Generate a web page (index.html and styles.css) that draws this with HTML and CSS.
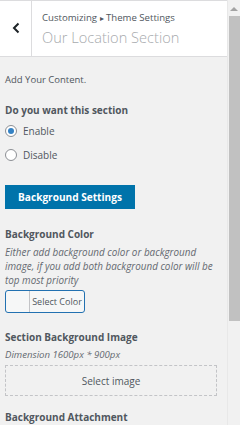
FILE: index.html
```html
<!DOCTYPE html>
<html>
<head>
<meta charset="utf-8">
<link rel="stylesheet" href="styles.css">
</head>
<body>
<div class="frame">
  <div class="panel">
    <header class="head">
      <div class="back">
        <svg width="8" height="12" viewBox="0 0 8 12"><path d="M6.5 1.5 L2 6 L6.5 10.5" fill="none" stroke="#1d2327" stroke-width="2"/></svg>
      </div>
      <div class="titles">
        <div class="crumb">Customizing <span class="tri">▸</span> Theme Settings</div>
        <div class="title">Our Location Section</div>
      </div>
    </header>
    <main class="content">
      <p class="intro">Add Your Content.</p>
      <h3 class="label first">Do you want this section</h3>
      <label class="radio"><span class="dot on"></span>Enable</label>
      <label class="radio"><span class="dot"></span>Disable</label>
      <div class="btn">Background Settings</div>
      <h3 class="label">Background Color</h3>
      <p class="desc">Either add background color or background image, if you add both background color will be top most priority</p>
      <div class="color"><span class="swatch"></span><span class="ctext">Select Color</span></div>
      <h3 class="label">Section Background Image</h3>
      <p class="desc short">Dimension 1600px * 900px</p>
      <div class="upload">Select image</div>
      <h3 class="label">Background Attachment</h3>
    </main>
  </div>
  <div class="scroll">
    <div class="arrow"></div>
    <div class="thumb"></div>
  </div>
</div>
</body>
</html>
```
FILE: styles.css
```css
* { box-sizing: border-box; }
html, body { margin: 0; padding: 0; }
body {
  width: 240px;
  height: 425px;
  overflow: hidden;
  background: #f1f1f1;
  font-family: "Open Sans", "Noto Sans", sans-serif;
  color: #50575e;
}
.frame { display: flex; height: 425px; }
.panel { flex: 1; min-width: 0; }
.head {
  display: flex;
  height: 57px;
  background: #fff;
  border-top: 1px solid #dcdcde;
  border-bottom: 1px solid #dcdcde;
}
.back {
  width: 32px;
  border-right: 1px solid #dcdcde;
  display: flex;
  align-items: center;
  justify-content: center;
  padding-bottom: 2px;
}
.titles { padding: 10px 0 0 10px; }
.crumb { font-size: 9.6px; line-height: 14px; color: #50575e; }
.tri { font-size: 8px; }
.title { font-size: 14.6px; line-height: 22px; margin-top: 1px; color: #a7aaad; font-weight: 300; }
.content { padding: 0 5px; }
.intro { margin: 16px 0 0; font-size: 9.5px; line-height: 14px; }
.label { margin: 0; font-size: 10px; font-weight: 700; line-height: 16px; color: #50575e; }
.label.first { margin-top: 15px; }
.radio { display: flex; align-items: center; font-size: 10px; line-height: 14px; height: 24px; gap: 6px; }
.radio:first-of-type { margin-top: 1px; }
.dot {
  width: 12px; height: 12px; border-radius: 50%;
  border: 1px solid #8c8f94; background: #fff;
  display: flex; align-items: center; justify-content: center;
}
.dot.on::after { content: ""; width: 6px; height: 6px; border-radius: 50%; background: #3582c4; }
.btn {
  margin-top: 18px;
  width: 130px; height: 24px;
  background: #0073aa; color: #fff;
  font-weight: 700; font-size: 10.1px;
  display: flex; align-items: center; justify-content: center;
  margin-bottom: 17px;
}
.desc { margin: 3px 0 0; max-width: 212px; font-size: 9.9px; font-style: italic; line-height: 14px; color: #646970; }
.color {
  margin-top: 3px;
  width: 80px; height: 23px;
  border: 1px solid #2271b1; border-radius: 3px;
  display: flex; background: #f6f7f7;
  margin-bottom: 16px;
}
.swatch { width: 24px; border-right: 1px solid #c3c4c7; }
.ctext { flex: 1; font-size: 9px; display: flex; align-items: center; justify-content: center; color: #50575e; }
.desc.short { margin-top: 3px; font-size: 9.6px; }
.upload {
  margin-top: 3px; width: 212px; height: 31px;
  border: 1px dashed #c3c4c7;
  display: flex; align-items: center; justify-content: center;
  font-size: 10px; color: #50575e;
  margin-bottom: 13px;
}
.scroll { width: 13px; background: #f1f1f1; border-left: 1px solid #e8e8e8; display: flex; flex-direction: column; align-items: center; }
.arrow { margin-top: 7px; width: 0; height: 0; border-left: 4px solid transparent; border-right: 4px solid transparent; border-bottom: 4px solid #a3a3a3; }
.thumb { margin-top: 5px; width: 11px; height: 305px; background: #c1c1c1; }
```
